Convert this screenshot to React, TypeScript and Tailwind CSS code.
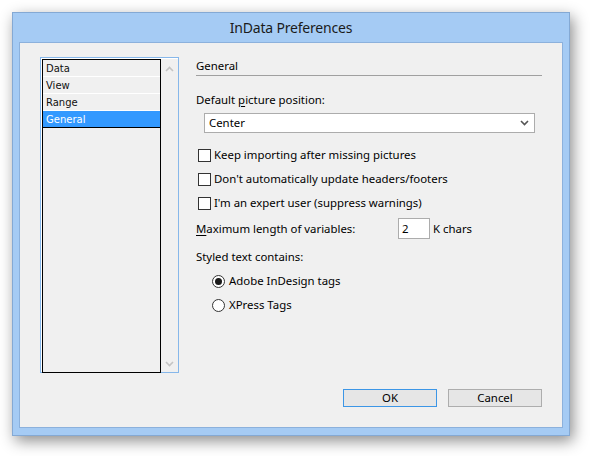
import React from "react";

const ui = { fontFamily: '"Noto Sans", "Open Sans", sans-serif' };
const listFont = { fontFamily: '"DejaVu Sans", sans-serif' };

function Checkbox({ label }: { label: React.ReactNode }) {
  return (
    <div className="flex items-center h-[20px] ml-[2px] gap-[3px]">
      <div className="w-[13px] h-[13px] border border-[#333333] bg-white shrink-0" />
      <span className="leading-[16px]">{label}</span>
    </div>
  );
}

function Radio({ label, checked }: { label: string; checked?: boolean }) {
  return (
    <div className="flex items-center h-[20px] ml-[16px] gap-[4px]">
      <div className="w-[13px] h-[13px] rounded-full border border-[#333333] bg-white shrink-0 flex items-center justify-center">
        {checked && <div className="w-[7px] h-[7px] rounded-full bg-[#1a1a1a]" />}
      </div>
      <span className="leading-[16px]">{label}</span>
    </div>
  );
}

function Chevron({ up, className }: { up?: boolean; className?: string }) {
  return (
    <svg width="9" height="6" viewBox="0 0 9 6" className={className}>
      <path
        d={up ? "M1 5 L4.5 1.5 L8 5" : "M1 1 L4.5 4.5 L8 1"}
        fill="none"
        stroke="currentColor"
        strokeWidth="1.6"
      />
    </svg>
  );
}

export default function App() {
  return (
    <div className="w-[590px] h-[456px] bg-white pl-[12px] pt-[12px] text-black" style={ui}>
      <div className="w-[558px] h-[424px] bg-[#a5cbf4] border border-[#84a9d4] shadow-[3px_5px_14px_rgba(0,0,0,0.45)] flex flex-col">
        <div className="h-[29px] flex items-center justify-center text-[14px] tracking-[-0.2px] text-[#1b1b1b]">
          InData Preferences
        </div>
        <div className="mx-[6px] mb-[7px] flex-1 bg-[#f0f0f0] border border-[#8cb1dc] flex pl-[20px] pt-[14px] text-[11.4px]">
          {/* list box */}
          <div className="w-[139px] h-[316px] border border-[#86b7ea] bg-white p-px pr-0 pb-0 flex">
            <div className="w-[119px] h-[314px] border border-black bg-[#f0f0f0] flex flex-col text-[10px] font-medium" style={listFont}>
              {["Data", "View", "Range"].map((t) => (
                <div key={t} className="h-[17px] border-b border-white pl-[3px] flex items-center text-[#111]">
                  {t}
                </div>
              ))}
              <div className="h-[17px] border-b border-black bg-[#3399ff] text-white pl-[3px] flex items-center">
                General
              </div>
            </div>
            <div className="flex-1 flex flex-col items-center justify-between pt-[7px] pb-[5px] bg-[#f0f0f0] text-[#c4c4c4]">
              <Chevron up />
              <Chevron />
            </div>
          </div>

          {/* right panel */}
          <div className="ml-[17px] w-[346px] h-[350px] flex flex-col">
            <div className="h-[19px] pt-px border-b border-[#a0a0a0] leading-[16px]">General</div>
            <div className="mt-[16px] leading-[16px]">
              Default <u className="underline-offset-2">p</u>icture position:
            </div>
            <div className="mt-[5px] ml-[8px] w-[331px] h-[20px] border border-[#acacac] bg-white flex items-center justify-between pl-[4px] pr-[5px]">
              <span className="leading-[16px]">Center</span>
              <Chevron className="text-[#555]" />
            </div>
            <div className="mt-[12px] flex flex-col gap-[4px]">
              <Checkbox label="Keep importing after missing pictures" />
              <Checkbox label="Don't automatically update headers/footers" />
              <Checkbox label="I'm an expert user (suppress warnings)" />
            </div>
            <div className="mt-[5px] h-[21px] flex items-center">
              <span className="w-[202px] leading-[16px]">
                <u className="underline-offset-2">M</u>aximum length of variables:
              </span>
              <div className="w-[32px] h-[21px] border border-[#acacac] bg-white flex items-center pl-[3px] leading-[16px]">2</div>
              <span className="ml-[3px] leading-[16px]">K chars</span>
            </div>
            <div className="mt-[10px] leading-[16px]">Styled text contains:</div>
            <div className="mt-[6px] flex flex-col gap-[4px]">
              <Radio label="Adobe InDesign tags" checked />
              <Radio label="XPress Tags" />
            </div>
            <div className="mt-auto flex justify-end gap-[11px]">
              <div className="w-[94px] h-[18px] border border-[#3c96e6] bg-[#e6e6e6] flex items-center justify-center leading-[16px]">OK</div>
              <div className="w-[94px] h-[18px] border border-[#adadad] bg-[#e6e6e6] flex items-center justify-center leading-[16px]">Cancel</div>
            </div>
          </div>
        </div>
      </div>
    </div>
  );
}
